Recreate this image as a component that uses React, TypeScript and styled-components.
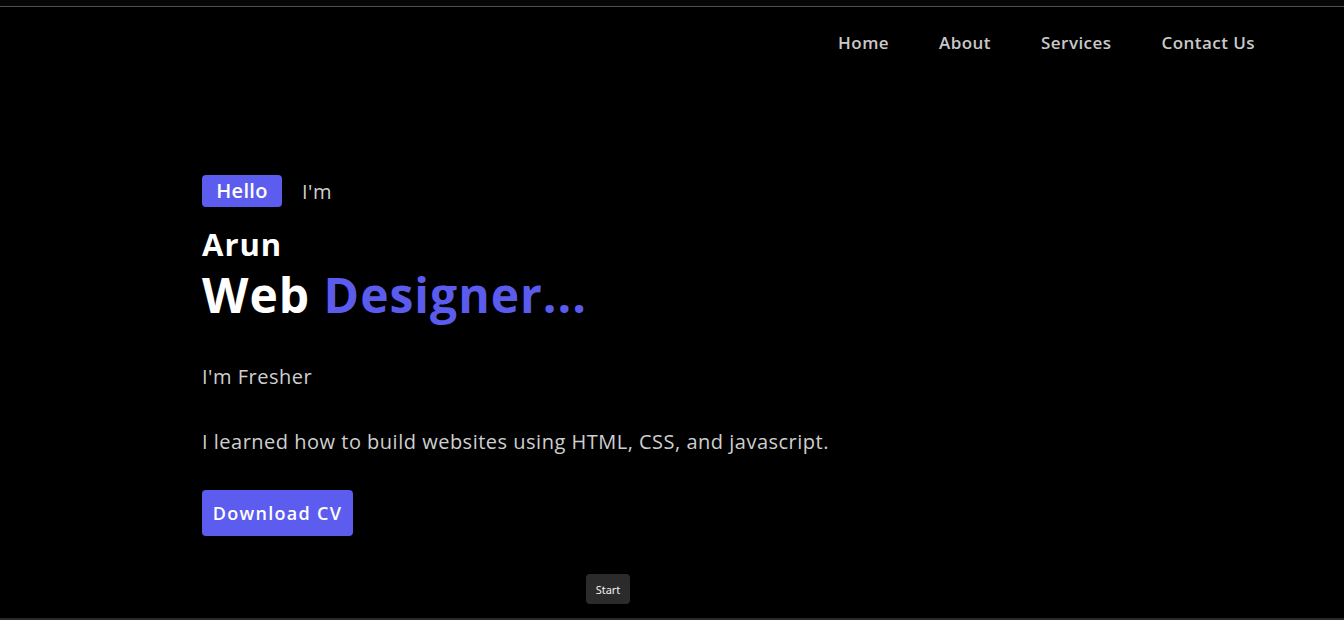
import React from "react";
import styled, { createGlobalStyle } from "styled-components";

const Global = createGlobalStyle`
  html, body { margin: 0; padding: 0; background: #000; }
  body { font-family: "Open Sans", "Noto Sans", sans-serif; }
  * { box-sizing: border-box; }
`;

const Page = styled.div`
  width: 1344px;
  height: 620px;
  display: flex;
  flex-direction: column;
  background: #000;
  overflow: hidden;
`;

const TopStrip = styled.div`
  height: 7px;
  flex: none;
  background: #060606;
  border-bottom: 1px solid #4f4f4f;
`;

const Main = styled.div`
  flex: 1;
  display: flex;
  flex-direction: column;
  position: relative;
`;

const BottomStrip = styled.div`
  height: 2px;
  flex: none;
  background: #2a2a2a;
`;

const Nav = styled.nav`
  display: flex;
  justify-content: flex-end;
  gap: 50px;
  padding: 24px 89px 0 0;
  height: 66px;
`;

const NavLink = styled.a`
  font-family: "Open Sans", sans-serif;
  font-weight: 600;
  font-size: 17px;
  letter-spacing: 0.45px;
  color: #c9c9c9;
  text-decoration: none;
  line-height: 24px;
`;

const Hero = styled.section`
  display: flex;
  flex-direction: column;
  align-items: flex-start;
  padding: 102px 0 0 202px;
`;

const GreetRow = styled.div`
  display: flex;
  align-items: center;
  gap: 20px;
`;

const Badge = styled.span`
  background: #5c5cef;
  color: #fff;
  font-weight: 600;
  font-size: 20px;
  letter-spacing: 0.3px;
  line-height: 32px;
  height: 32px;
  width: 80px;
  text-align: center;
  border-radius: 4px;
`;

const Im = styled.span`
  color: #cfcfcf;
  font-size: 20px;
  letter-spacing: 0.5px;
  font-weight: 400;
`;

const Name = styled.h2`
  margin: 21px 0 0;
  color: #fff;
  font-size: 31px;
  font-weight: 700;
  line-height: 32px;
  letter-spacing: 1px;
`;

const Title = styled.h1`
  margin: 6px 0 0;
  color: #fff;
  font-size: 48px;
  font-weight: 700;
  line-height: 58px;
  letter-spacing: 1px;
`;

const Accent = styled.span`
  color: #5b5cee;
`;

const Text = styled.p<{ $mt: number }>`
  margin: ${(p) => p.$mt}px 0 0;
  color: #cfcfcf;
  font-size: 20px;
  letter-spacing: 0.5px;
  line-height: 28px;
`;

const Button = styled.button`
  margin-top: 34px;
  height: 46px;
  padding: 0;
  width: 151px;
  border: none;
  border-radius: 4px;
  background: #5c5cef;
  color: #fff;
  font-family: "Open Sans", sans-serif;
  font-weight: 600;
  font-size: 18px;
  letter-spacing: 1.3px;
`;

const Tooltip = styled.div`
  position: absolute;
  left: 586px;
  top: 567px;
  width: 44px;
  height: 30px;
  display: flex;
  align-items: center;
  justify-content: center;
  background: #2b2b2b;
  border-radius: 4px;
  color: #f2f2f2;
  font-family: "Noto Sans", sans-serif;
  font-size: 11px;
`;

export default function App() {
  return (
    <>
      <Global />
      <Page>
        <TopStrip />
        <Main>
          <Nav>
            <NavLink href="#">Home</NavLink>
            <NavLink href="#">About</NavLink>
            <NavLink href="#">Services</NavLink>
            <NavLink href="#">Contact Us</NavLink>
          </Nav>
          <Hero>
            <GreetRow>
              <Badge>Hello</Badge>
              <Im>I'm</Im>
            </GreetRow>
            <Name>Arun</Name>
            <Title>
              Web <Accent>Designer...</Accent>
            </Title>
            <Text $mt={39}>I'm Fresher</Text>
            <Text $mt={37}>I learned how to build websites using HTML, CSS, and javascript.</Text>
            <Button>Download CV</Button>
          </Hero>
          <Tooltip>Start</Tooltip>
        </Main>
        <BottomStrip />
      </Page>
    </>
  );
}
